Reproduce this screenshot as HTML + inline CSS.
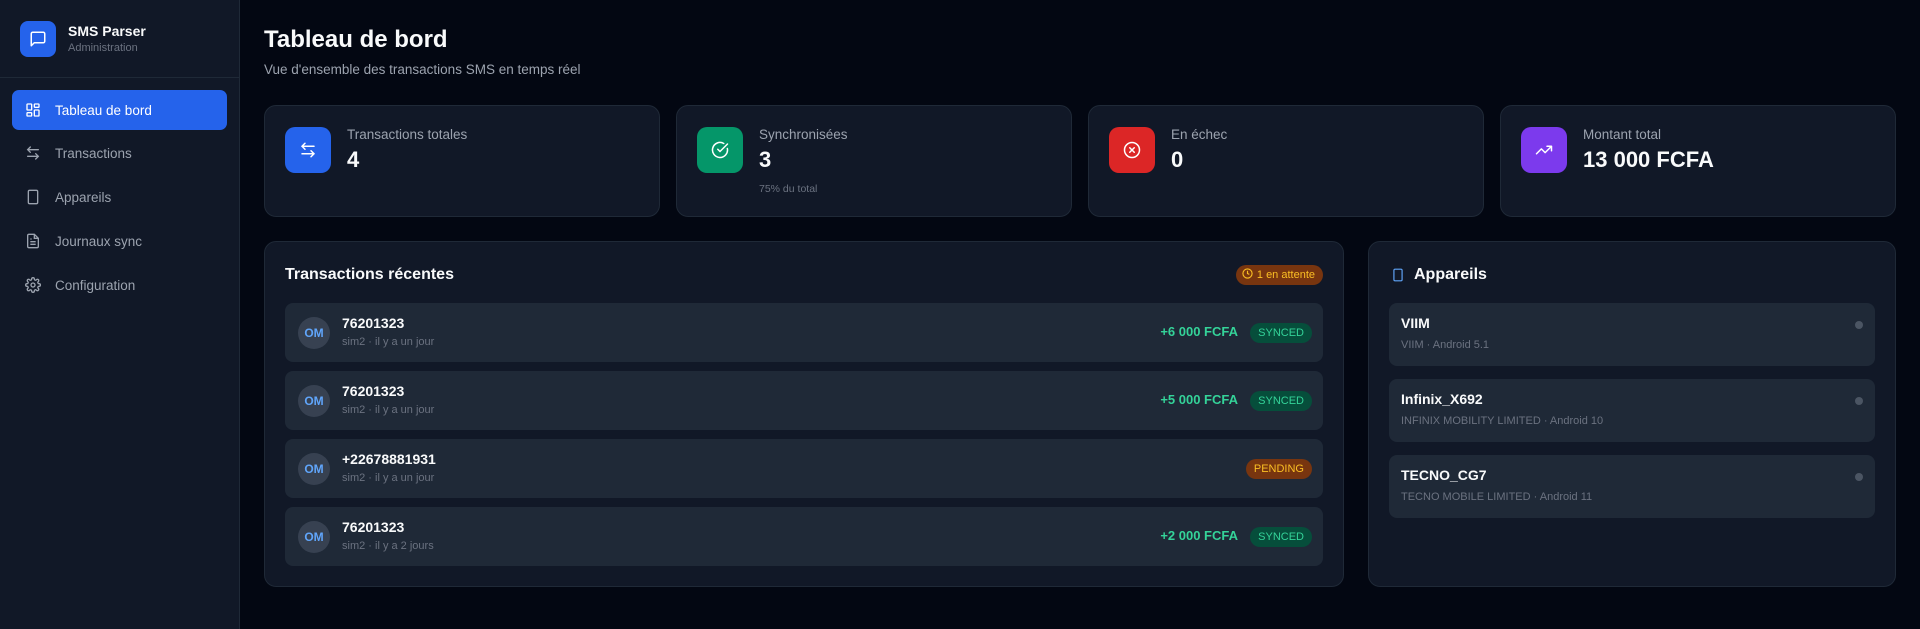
<!DOCTYPE html>
<html><head><meta charset="utf-8"><style>
*{box-sizing:border-box;margin:0;padding:0}
body{width:1920px;height:629px;background:#030712;font-family:"Liberation Sans",sans-serif;color:#f9fafb;position:relative;overflow:hidden}
.sb{position:absolute;left:0;top:0;width:240px;height:629px;background:#111827;border-right:1px solid #1f2937}
.sbh{height:78px;border-bottom:1px solid #1f2937;position:relative}
.logo{position:absolute;left:20px;top:21px;width:36px;height:36px;border-radius:8px;background:#2563eb;display:flex;align-items:center;justify-content:center}
.bt{position:absolute;left:68px;top:23px;font-size:14px;font-weight:bold}
.bs{position:absolute;left:68px;top:42px;font-size:11px;color:#6b7280}
.nav{position:absolute;left:12px;width:215px;height:40px;border-radius:7px;display:flex;align-items:center;padding-left:13px;font-size:13.5px;color:#9ca3af}
.nav svg{margin-right:14px}
.nav.a{background:#2563eb;color:#fff}
.card{position:absolute;background:#111827;border:1px solid #1f2937;border-radius:12px}
.ib{position:absolute;left:20px;top:21px;width:46px;height:46px;border-radius:10px;display:flex;align-items:center;justify-content:center}
.lab{position:absolute;left:82px;top:21px;font-size:13.5px;color:#9ca3af}
.val{position:absolute;left:82px;top:41px;font-size:22px;font-weight:bold}
.sub{position:absolute;left:82px;top:77px;font-size:10.5px;color:#6b7280}
.row{position:absolute;left:20px;width:1038px;height:59px;background:#1f2937;border-radius:8px}
.av{position:absolute;left:13px;top:14px;width:32px;height:32px;border-radius:50%;background:#374151;color:#60a5fa;font-size:12px;font-weight:bold;display:flex;align-items:center;justify-content:center}
.num{position:absolute;left:57px;top:12px;font-size:14px;font-weight:bold}
.meta{position:absolute;left:57px;top:33px;font-size:11px;color:#6b7280}
.amt{position:absolute;right:85px;top:21px;font-size:13px;font-weight:bold;color:#34d399}
.bd{position:absolute;right:11px;top:20px;height:20px;border-radius:10px;font-size:11px;padding:0 8px;line-height:20px}
.syn{background:#064e3b;color:#34d399}
.pen{background:#78350f;color:#fbbf24}
.dev{position:absolute;left:20px;width:486px;height:63px;background:#1f2937;border-radius:8px}
.dn{position:absolute;left:12px;top:12px;font-size:14px;font-weight:bold}
.dm{position:absolute;left:12px;top:36px;font-size:11px;color:#6b7280}
.dot{position:absolute;right:12px;top:18px;width:8px;height:8px;border-radius:50%;background:#4b5563}
</style></head><body>
<div class="sb">
<div class="sbh">
<div class="logo"><svg width="18" height="18" viewBox="0 0 24 24" fill="none" stroke="#fff" stroke-width="2" stroke-linejoin="round"><path d="M21 15a2 2 0 0 1-2 2H7l-4 4V5a2 2 0 0 1 2-2h14a2 2 0 0 1 2 2z"/></svg></div>
<div class="bt">SMS Parser</div><div class="bs">Administration</div>
</div>
<div class="nav a" style="top:90px"><svg width="16" height="16" viewBox="0 0 24 24" fill="none" stroke="#fff" stroke-width="2"><rect x="3" y="3" width="7" height="9" rx="1"/><rect x="14" y="3" width="7" height="5" rx="1"/><rect x="14" y="12" width="7" height="9" rx="1"/><rect x="3" y="16" width="7" height="5" rx="1"/></svg>Tableau de bord</div>
<div class="nav" style="top:133px"><svg width="16" height="16" viewBox="0 0 24 24" fill="none" stroke="#9ca3af" stroke-width="2" stroke-linecap="round"><path d="M8 3L4 7l4 4M4 7h16M16 21l4-4-4-4M20 17H4"/></svg>Transactions</div>
<div class="nav" style="top:177px"><svg width="16" height="16" viewBox="0 0 24 24" fill="none" stroke="#9ca3af" stroke-width="2"><rect x="5" y="2" width="14" height="20" rx="2"/><path d="M12 18h.01"/></svg>Appareils</div>
<div class="nav" style="top:221px"><svg width="16" height="16" viewBox="0 0 24 24" fill="none" stroke="#9ca3af" stroke-width="2"><path d="M14 2H6a2 2 0 0 0-2 2v16a2 2 0 0 0 2 2h12a2 2 0 0 0 2-2V8z"/><path d="M14 2v6h6M16 13H8M16 17H8M10 9H8"/></svg>Journaux sync</div>
<div class="nav" style="top:265px"><svg width="16" height="16" viewBox="0 0 24 24" fill="none" stroke="#9ca3af" stroke-width="2"><circle cx="12" cy="12" r="3"/><path d="M19.4 15a1.7 1.7 0 0 0 .3 1.8l.1.1a2 2 0 1 1-2.8 2.8l-.1-.1a1.7 1.7 0 0 0-2.9 1.2V21a2 2 0 1 1-4 0v-.1a1.7 1.7 0 0 0-2.9-1.2l-.1.1a2 2 0 1 1-2.8-2.8l.1-.1A1.7 1.7 0 0 0 3 14H3a2 2 0 1 1 0-4h.1a1.7 1.7 0 0 0 1.2-2.9l-.1-.1a2 2 0 1 1 2.8-2.8l.1.1A1.7 1.7 0 0 0 10 3V3a2 2 0 1 1 4 0v.1a1.7 1.7 0 0 0 2.9 1.2l.1-.1a2 2 0 1 1 2.8 2.8l-.1.1A1.7 1.7 0 0 0 21 10h.1a2 2 0 1 1 0 4H21a1.7 1.7 0 0 0-1.6 1z"/></svg>Configuration</div>
</div>

<div style="position:absolute;left:264px;top:26px;font-size:24px;font-weight:bold">Tableau de bord</div>
<div style="position:absolute;left:264px;top:62px;font-size:13.5px;color:#9ca3af">Vue d'ensemble des transactions SMS en temps réel</div>

<div class="card" style="left:264px;top:105px;width:396px;height:112px">
<div class="ib" style="background:#2563eb"><svg width="18" height="18" viewBox="0 0 24 24" fill="none" stroke="#fff" stroke-width="2" stroke-linecap="round"><path d="M8 3L4 7l4 4M4 7h16M16 21l4-4-4-4M20 17H4"/></svg></div>
<div class="lab">Transactions totales</div><div class="val">4</div></div>
<div class="card" style="left:676px;top:105px;width:396px;height:112px">
<div class="ib" style="background:#059669"><svg width="18" height="18" viewBox="0 0 24 24" fill="none" stroke="#fff" stroke-width="2" stroke-linecap="round"><path d="M21.8 10A10 10 0 1 1 17 3.3"/><path d="M9 11l3 3L22 4"/></svg></div>
<div class="lab">Synchronisées</div><div class="val">3</div><div class="sub">75% du total</div></div>
<div class="card" style="left:1088px;top:105px;width:396px;height:112px">
<div class="ib" style="background:#dc2626"><svg width="18" height="18" viewBox="0 0 24 24" fill="none" stroke="#fff" stroke-width="2" stroke-linecap="round"><circle cx="12" cy="12" r="10"/><path d="M15 9l-6 6M9 9l6 6"/></svg></div>
<div class="lab">En échec</div><div class="val">0</div></div>
<div class="card" style="left:1500px;top:105px;width:396px;height:112px">
<div class="ib" style="background:#7c3aed"><svg width="18" height="18" viewBox="0 0 24 24" fill="none" stroke="#fff" stroke-width="2" stroke-linecap="round" stroke-linejoin="round"><path d="M22 7l-8.5 8.5-5-5L2 17M16 7h6v6"/></svg></div>
<div class="lab">Montant total</div><div class="val">13 000 FCFA</div></div>

<div class="card" style="left:264px;top:241px;width:1080px;height:346px">
<div style="position:absolute;left:20px;top:24px;font-size:16px;font-weight:bold">Transactions récentes</div>
<div class="bd pen" style="top:23px;right:20px;font-size:11px;padding:0 8px 0 6px"><svg width="11" height="11" viewBox="0 0 24 24" fill="none" stroke="#fbbf24" stroke-width="2.5" style="vertical-align:-1px;margin-right:4px"><circle cx="12" cy="12" r="10"/><path d="M12 6v6l4 2"/></svg>1 en attente</div>
<div class="row" style="top:61px"><div class="av">OM</div><div class="num">76201323</div><div class="meta">sim2 · il y a un jour</div><div class="amt">+6 000 FCFA</div><div class="bd syn">SYNCED</div></div>
<div class="row" style="top:129px"><div class="av">OM</div><div class="num">76201323</div><div class="meta">sim2 · il y a un jour</div><div class="amt">+5 000 FCFA</div><div class="bd syn">SYNCED</div></div>
<div class="row" style="top:197px"><div class="av">OM</div><div class="num">+22678881931</div><div class="meta">sim2 · il y a un jour</div><div class="bd pen">PENDING</div></div>
<div class="row" style="top:265px"><div class="av">OM</div><div class="num">76201323</div><div class="meta">sim2 · il y a 2 jours</div><div class="amt">+2 000 FCFA</div><div class="bd syn">SYNCED</div></div>
</div>

<div class="card" style="left:1368px;top:241px;width:528px;height:346px">
<div style="position:absolute;left:22px;top:24px;font-size:16px;font-weight:bold;display:flex;align-items:center"><svg width="14" height="18" viewBox="0 0 24 24" fill="none" stroke="#60a5fa" stroke-width="2" style="margin-right:9px"><rect x="5" y="2" width="14" height="20" rx="2"/><path d="M12 18h.01"/></svg>Appareils</div>
<div class="dev" style="top:61px"><div class="dn">VIIM</div><div class="dm">VIIM · Android 5.1</div><div class="dot"></div></div>
<div class="dev" style="top:137px"><div class="dn">Infinix_X692</div><div class="dm">INFINIX MOBILITY LIMITED · Android 10</div><div class="dot"></div></div>
<div class="dev" style="top:213px"><div class="dn">TECNO_CG7</div><div class="dm">TECNO MOBILE LIMITED · Android 11</div><div class="dot"></div></div>
</div>
</body></html>
